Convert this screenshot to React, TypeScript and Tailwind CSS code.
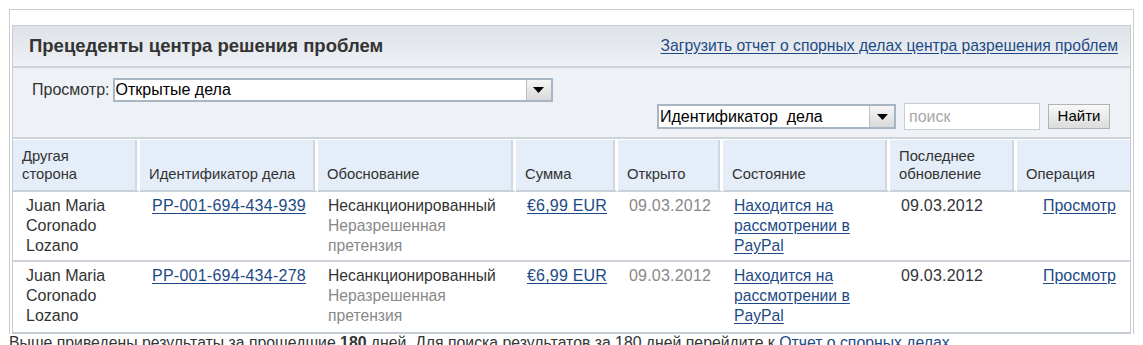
const rows = [
  { id: "PP-001-694-434-939" },
  { id: "PP-001-694-434-278" },
];

const cols = "grid-cols-[127px_178px_198px_102px_105px_167px_127px_113px]";

function Arrow() {
  return (
    <span className="flex h-full w-[25px] items-center justify-center border-l border-[#b8c0c8] bg-gradient-to-b from-[#f6f6f6] to-[#d9d9d9]">
      <svg width="11" height="6" viewBox="0 0 11 6">
        <path d="M0 0h11L5.5 6z" fill="#000" />
      </svg>
    </span>
  );
}

export default function App() {
  const link = "text-[#1d4a86] underline underline-offset-2";
  const num = "text-[16px] tracking-[0.2px]";
  return (
    <div className="min-h-[345px] bg-white pt-[9px] pl-[9px] font-['Liberation_Sans',Arial,sans-serif] text-[15.5px] text-[#333]">
      <div className="w-[1125px] border border-b-0 border-[#cccccc] px-[2px] pt-[15px]">
        <div className="border-x border-b-2 border-t border-[#c6ccd3]">
          <div className="flex h-[42px] items-center justify-between border-b-2 border-[#cfd4da] bg-gradient-to-b from-[#dde2e8] to-[#eef1f5] pl-[16px] pr-[12px]">
            <h1 className="text-[18.5px] font-bold text-[#333]">Прецеденты центра решения проблем</h1>
            <a className={`${link} text-[15.7px]`}>Загрузить отчет о спорных делах центра разрешения проблем</a>
          </div>
          <div className="h-[71px] border-b-2 border-[#cfd4da] bg-[#eef1f6] pt-[10px] text-[16px]">
            <div className="flex items-center pl-[19px]">
              <span className="mr-[3px] text-[#333]">Просмотр:</span>
              <div className="flex h-[24px] w-[440px] items-center border-2 border-[#a8b5c3] bg-white">
                <span className="flex-1 pl-[1px] text-black">Открытые дела</span>
                <Arrow />
              </div>
            </div>
            <div className="mt-[1px] flex items-center justify-end pr-[20px]">
              <div className="flex h-[25px] w-[239px] items-center border-2 border-[#a8b5c3] bg-white">
                <span className="flex-1 pl-[1px] whitespace-pre text-black">Идентификатор  дела</span>
                <Arrow />
              </div>
              <div className="ml-[8px] flex h-[27px] w-[136px] items-center border border-[#c8cdd3] bg-white pl-[4px] text-[#a8a8a8]">
                поиск
              </div>
              <button className="ml-[8px] h-[25px] w-[62px] border border-[#b0b4b8] bg-gradient-to-b from-[#f8f8f8] to-[#dcdcdc] text-[15px] text-black">
                Найти
              </button>
            </div>
          </div>
          <div className={`grid ${cols} border-t border-white text-[14.8px]`}>
            {["Другая сторона", "Идентификатор дела", "Обоснование", "Сумма", "Открыто", "Состояние", "Последнее обновление", "Операция"].map((h, i) => (
              <div
                key={h}
                className={`flex h-[52px] items-end border-b-2 border-[#c9d0d8] bg-[#e4edf8] pb-[7px] pl-[9px] leading-[18px] text-[#333] ${i < 7 ? "border-r-[3px] border-r-white shadow-[inset_-2px_0_0_#cfd7e1]" : ""} ${i === 0 || i === 6 ? "pr-[30px]" : ""}`}
              >
                {h}
              </div>
            ))}
          </div>
          {rows.map((r, i) => (
            <div key={r.id} className={`grid ${cols} h-[70px] bg-white leading-[20px] ${i === 0 ? "border-b-2 border-[#cfd4da]" : ""}`}>
              <div className="pl-[13px] pt-[4px] pr-[20px] text-[16px] text-[#333]">Juan Maria Coronado Lozano</div>
              <div className="pl-[12px] pt-[4px]"><a className={`${link} ${num} tracking-[0.25px]`}>{r.id}</a></div>
              <div className="pl-[10px] pt-[4px]">
                <div className="text-[15.7px] text-[#333]">Несанкционированный</div>
                <div className="pr-[40px] text-[15.7px] text-[#888]">Неразрешенная претензия</div>
              </div>
              <div className="pl-[11px] pt-[4px]"><a className={`${link} ${num}`}>€6,99 EUR</a></div>
              <div className={`pl-[11px] pt-[4px] text-[#888] ${num}`}>09.03.2012</div>
              <div className="pl-[11px] pt-[4px] pr-[14px] text-[15.7px]"><a className={link}>Находится на рассмотрении в PayPal</a></div>
              <div className={`pl-[11px] pt-[4px] text-[#333] ${num}`}>09.03.2012</div>
              <div className="pr-[14px] pt-[4px] text-right text-[16px]"><a className={link}>Просмотр</a></div>
            </div>
          ))}
        </div>
      </div>
      <p className="text-[15.8px] leading-[17px] text-[#333]">
        Выше приведены результаты за прошедшие <b>180</b> дней. Для поиска результатов за 180 дней перейдите к{" "}
        <a className="text-[#1d4a86]">Отчет о спорных делах</a>
      </p>
    </div>
  );
}
